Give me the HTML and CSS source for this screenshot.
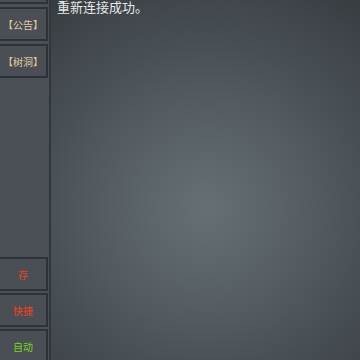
FILE: index.html
```html
<!DOCTYPE html>
<html lang="zh">
<head>
    <meta charset="UTF-8">
    <meta name="viewport" content="width=device-width, initial-scale=1.0">
    <title>聊天</title>
    <link rel="stylesheet" href="styles.css">
</head>
<body>
    <div class="app">
        <div class="sidebar">
            <div class="side-group side-top">
                <button class="side-btn"></button>
                <button class="side-btn tan">【公告】</button>
                <button class="side-btn tan">【树洞】</button>
            </div>
            <div class="side-group side-bottom">
                <button class="side-btn red">存</button>
                <button class="side-btn red">快捷</button>
                <button class="side-btn green">自动</button>
            </div>
        </div>
        <div class="main">
            <p class="msg">重新连接成功。</p>
        </div>
    </div>
</body>
</html>
```

FILE: styles.css
```css
* {
    margin: 0;
    padding: 0;
    box-sizing: border-box;
}

body {
    width: 360px;
    height: 360px;
    overflow: hidden;
    font-family: "Noto Sans CJK SC", "Noto Sans", sans-serif;
    background: #3a3f44;
}

.app {
    display: flex;
    height: 100%;
}

.sidebar {
    width: 51px;
    flex-shrink: 0;
    background: #4a5055;
    border-right: 2px solid #33373b;
    box-shadow: 1px 0 0 #5d6468;
    display: flex;
    flex-direction: column;
    justify-content: space-between;
    overflow: hidden;
}

.side-group {
    display: flex;
    flex-direction: column;
    gap: 3px;
}

.side-top {
    margin-top: -30px;
}

.side-bottom {
    margin-bottom: -3px;
    gap: 2px;
}

.side-btn {
    width: 48px;
    height: 34px;
    background: #494f54;
    border: 2px solid #2e3236;
    border-left: none;
    color: #ddd;
    font-family: inherit;
    font-size: 10px;
}

.side-btn.tan {
    color: #e2c9a2;
}

.side-btn.red {
    color: #f0401e;
}

.side-btn.green {
    color: #7ed321;
}

.main {
    flex: 1;
    background: radial-gradient(circle at 50% 58%, #667074 0%, #525a5f 45%, #373c41 100%);
    padding: 0 6px;
}

.msg {
    color: #e8e8e8;
    font-size: 13px;
    line-height: 13px;
}
```
